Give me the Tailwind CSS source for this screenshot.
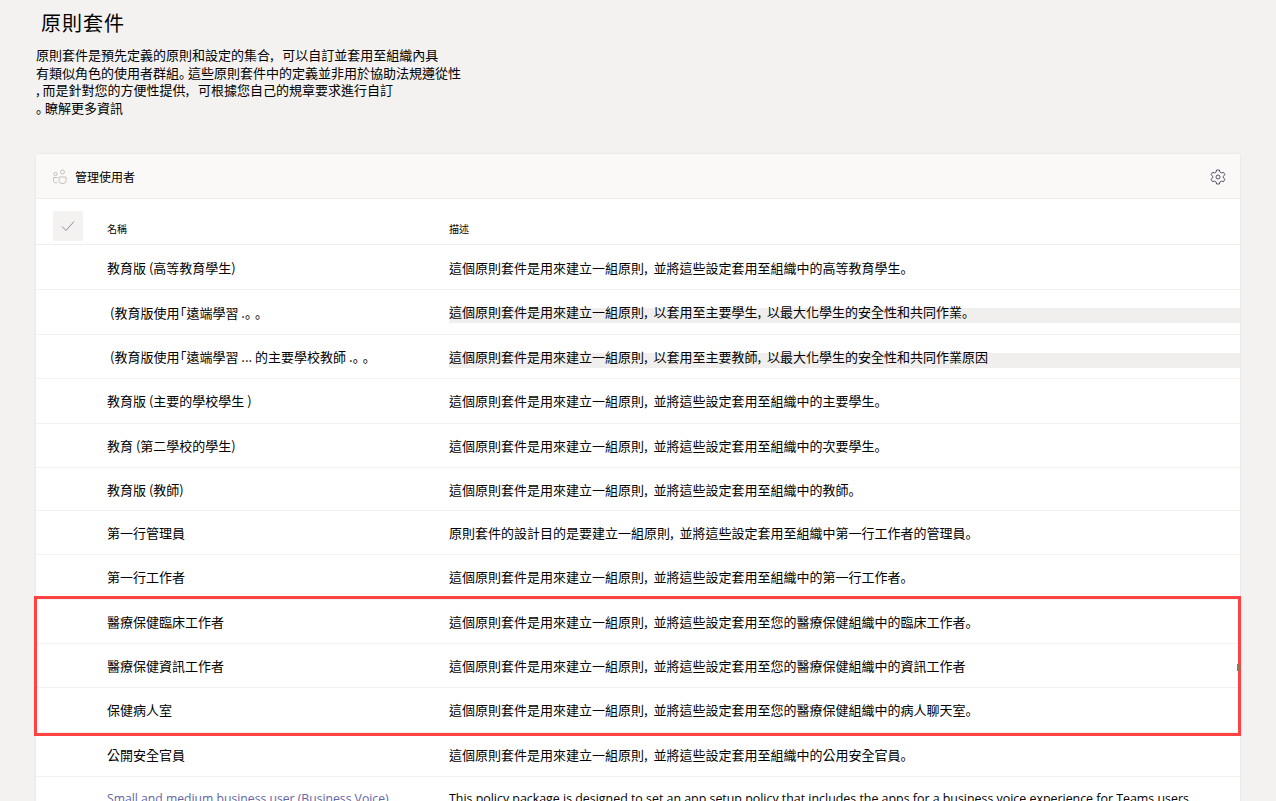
<!DOCTYPE html>
<html lang="zh-Hant">
<head>
    <meta charset="UTF-8">
    <meta name="viewport" content="width=device-width, initial-scale=1.0">
    <title>原則套件</title>
    <script src="https://cdn.jsdelivr.net/npm/@tailwindcss/browser@4"></script>
</head>
<body class="bg-[#f3f2f1] h-[801px] overflow-hidden relative font-['Noto_Sans_CJK_TC','Noto_Sans',sans-serif] text-black">
    <div class="pl-[36px] pt-[9px]">
        <h1 class="pl-[5px] text-[20px] leading-[28px] tracking-[1px] font-normal">原則套件</h1>
        <p class="mt-[9px] text-[13px] leading-[17.7px] whitespace-nowrap">
            原則套件是預先定義的原則和設定的集合,&nbsp;&nbsp; 可以自訂並套用至組織內具<br>
            有類似角色的使用者群組<span lang="ja" class="tracking-[-4px] font-['Noto_Sans_CJK_JP']">。</span>這些原則套件中的定義並非用於協助法規遵從性<br>
            ,&nbsp;而是針對您的方便性提供,&nbsp;&nbsp; 可根據您自己的規章要求進行自訂<br>
            <span lang="ja" class="tracking-[-4px] font-['Noto_Sans_CJK_JP']">。</span>瞭解更多資訊
        </p>
    </div>

    <div class="mt-[37px] ml-[36px] w-[1204px] bg-white rounded-t-[2px] shadow-[0_0_3px_rgba(0,0,0,0.08)]">
        <div class="h-[45px] pt-[2px] bg-[#faf9f8] border-b border-[#f0eeec] flex items-center pl-[16px] pr-[14px]">
            <svg class="w-[15px] h-[15px] text-[#c4c2c0]" viewBox="0 0 15 15" fill="none" stroke="currentColor" stroke-width="1">
                <circle cx="10.5" cy="3" r="2"/>
                <circle cx="3.5" cy="5" r="1.7"/>
                <path d="M7 8h7v3.5a3 3 0 0 1-3 3h-1a3 3 0 0 1-3-3z"/>
                <path d="M5.5 8.5H1.500v3a2.500 2.500 0 0 0 4 2"/>
            </svg>
            <span class="ml-[8px] text-[12px]">管理使用者</span>
            <svg class="ml-auto w-[16px] h-[16px] text-[#55536a]" viewBox="0 0 16 16" fill="none" stroke="currentColor" stroke-width="1">
                <circle cx="8" cy="8" r="2"/>
                <path d="M6.6 1h2.8l.5 2 1.6.9 2-.6 1.4 2.4-1.5 1.5v1.6l1.5 1.5-1.4 2.4-2-.6-1.6.9-.5 2H6.6l-.5-2-1.6-.9-2 .6L1.100 10.300l1.500-1.500V7.200L1.100 5.700 2.500 3.300l2 .6 1.600-.9z"/>
            </svg>
        </div>

        <div class="h-[46px] border-b border-[#f0eeec] flex pl-[17px]">
            <div class="mt-[12px] w-[30px] h-[30px] bg-[#f3f2f1] rounded-[2px] flex items-center justify-center">
                <svg class="w-[14px] h-[14px] text-[#8f8da0]" viewBox="0 0 14 14" fill="none" stroke="currentColor" stroke-width="1"><path d="M1 7.500l4 4 8-9"/></svg>
            </div>
            <div class="ml-[24px] w-[342px] pt-[22px] text-[10px] leading-[16px]">名稱</div>
            <div class="pt-[22px] text-[10px] leading-[16px]">描述</div>
        </div>

        <div class="text-[13px]">
            <div class="h-[45.3px] pt-[1px] border-b border-[#f3f2f1] flex items-center pl-[71px]"><div class="w-[342px]">教育版 (高等教育學生)</div><div>這個原則套件是用來建立一組原則,&nbsp; 並將這些設定套用至組織中的高等教育學生<span lang="ja" class="font-['Noto_Sans_CJK_JP']">。</span></div></div>
            <div class="h-[44.6px] pt-[1px] border-b border-[#f3f2f1] flex items-center pl-[71px]"><div class="w-[342px] pl-[3px]">(教育版使<span class="tracking-[-6px]">用</span>「遠端學習 .<span lang="ja" class="tracking-[3.5px] font-['Noto_Sans_CJK_JP']">。</span><span lang="ja" class="font-['Noto_Sans_CJK_JP']">。</span></div><div class="mt-[7px] flex-1 h-[15px] bg-[#f0efed] leading-[8px] whitespace-nowrap">這個原則套件是用來建立一組原則,&nbsp; 以套用至主要學生,&nbsp; 以最大化學生的安全性和共同作業<span lang="ja" class="font-['Noto_Sans_CJK_JP']">。</span></div></div>
            <div class="h-[44.6px] border-b border-[#f3f2f1] flex items-center pl-[71px]"><div class="w-[342px] pl-[3px]">(教育版使<span class="tracking-[-6px]">用</span>「遠端學習 ... 的主要學校教師 .<span lang="ja" class="tracking-[3.5px] font-['Noto_Sans_CJK_JP']">。</span><span lang="ja" class="font-['Noto_Sans_CJK_JP']">。</span></div><div class="mt-[8px] flex-1 h-[15px] bg-[#f0efed] leading-[8px] whitespace-nowrap">這個原則套件是用來建立一組原則,&nbsp; 以套用至主要教師,&nbsp; 以最大化學生的安全性和共同作業原因</div></div>
            <div class="h-[44.3px] border-b border-[#f3f2f1] flex items-center pl-[71px]"><div class="w-[342px]">教育版 (主要的學校學生 )</div><div>這個原則套件是用來建立一組原則,&nbsp; 並將這些設定套用至組織中的主要學生<span lang="ja" class="font-['Noto_Sans_CJK_JP']">。</span></div></div>
            <div class="h-[44.3px] pt-[1px] border-b border-[#f3f2f1] flex items-center pl-[71px]"><div class="w-[342px]">教育 (第二學校的學生)</div><div>這個原則套件是用來建立一組原則,&nbsp; 並將這些設定套用至組織中的次要學生<span lang="ja" class="font-['Noto_Sans_CJK_JP']">。</span></div></div>
            <div class="h-[43.3px] pt-[1px] border-b border-[#f3f2f1] flex items-center pl-[71px]"><div class="w-[342px]">教育版 (教師)</div><div>這個原則套件是用來建立一組原則,&nbsp; 並將這些設定套用至組織中的教師<span lang="ja" class="font-['Noto_Sans_CJK_JP']">。</span></div></div>
            <div class="h-[44.3px] border-b border-[#f3f2f1] flex items-center pl-[71px]"><div class="w-[342px]">第一行管理員</div><div>原則套件的設計目的是要建立一組原則,&nbsp; 並將這些設定套用至組織中第一行工作者的管理員<span lang="ja" class="font-['Noto_Sans_CJK_JP']">。</span></div></div>
            <div class="h-[44.3px] border-b border-[#f3f2f1] flex items-center pl-[71px]"><div class="w-[342px]">第一行工作者</div><div>這個原則套件是用來建立一組原則,&nbsp; 並將這些設定套用至組織中的第一行工作者<span lang="ja" class="font-['Noto_Sans_CJK_JP']">。</span></div></div>
            <div class="h-[44.3px] border-b border-[#f3f2f1] flex items-center pl-[71px]"><div class="w-[342px]">醫療保健臨床工作者</div><div>這個原則套件是用來建立一組原則,&nbsp; 並將這些設定套用至您的醫療保健組織中的臨床工作者<span lang="ja" class="font-['Noto_Sans_CJK_JP']">。</span></div></div>
            <div class="h-[44.3px] border-b border-[#f3f2f1] flex items-center pl-[71px]"><div class="w-[342px]">醫療保健資訊工作者</div><div>這個原則套件是用來建立一組原則,&nbsp; 並將這些設定套用至您的醫療保健組織中的資訊工作者</div></div>
            <div class="h-[44.3px] border-b border-[#f3f2f1] flex items-center pl-[71px]"><div class="w-[342px]">保健病人室</div><div>這個原則套件是用來建立一組原則,&nbsp; 並將這些設定套用至您的醫療保健組織中的病人聊天室<span lang="ja" class="font-['Noto_Sans_CJK_JP']">。</span></div></div>
            <div class="h-[44.3px] border-b border-[#f3f2f1] flex items-center pl-[71px]"><div class="w-[342px]">公開安全官員</div><div>這個原則套件是用來建立一組原則,&nbsp; 並將這些設定套用至組織中的公用安全官員<span lang="ja" class="font-['Noto_Sans_CJK_JP']">。</span></div></div>
            <div class="h-[44.3px] pt-[1px] border-b border-[#f3f2f1] flex items-center pl-[71px] font-['Open_Sans',sans-serif]"><div class="w-[342px] text-[#6264a7] text-[12.2px] whitespace-nowrap">Small and medium business user (Business Voice)</div><div class="text-[12.4px] whitespace-nowrap">This policy package is designed to set an app setup policy that includes the apps for a business voice experience for Teams users.</div></div>
        </div>
    </div>

    <!-- red highlight over the healthcare rows -->
    <div class="absolute left-[34px] top-[596px] w-[1207px] h-[140px] border-[3px] border-[#ff4242]"></div>
    <div class="absolute left-[1237px] top-[664px] w-[2px] h-[7px] bg-[#8a7a50]"></div>
</body>
</html>
